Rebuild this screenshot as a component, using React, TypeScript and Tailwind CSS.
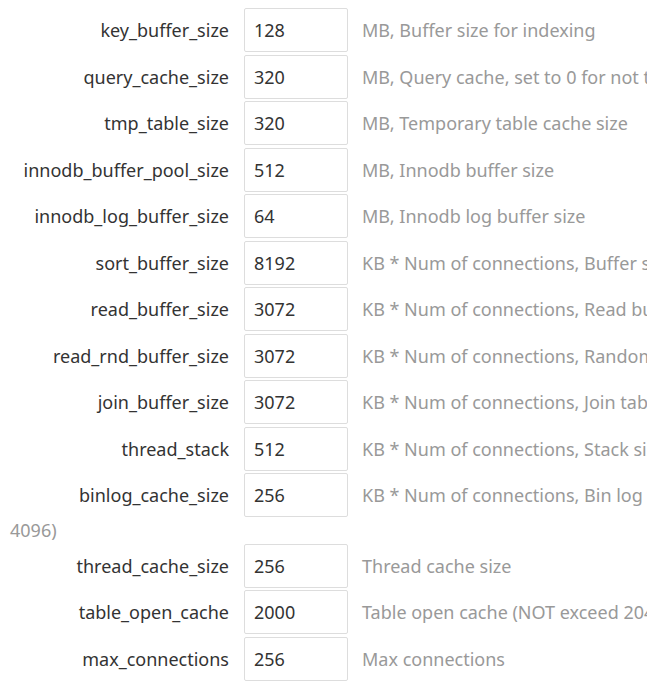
import React from 'react';

type Row = { name: string; value: string; desc: string };

const rows: Row[] = [
  { name: 'key_buffer_size', value: '128', desc: 'MB, Buffer size for indexing' },
  { name: 'query_cache_size', value: '320', desc: 'MB, Query cache, set to 0 for not to enable' },
  { name: 'tmp_table_size', value: '320', desc: 'MB, Temporary table cache size' },
  { name: 'innodb_buffer_pool_size', value: '512', desc: 'MB, Innodb buffer size' },
  { name: 'innodb_log_buffer_size', value: '64', desc: 'MB, Innodb log buffer size' },
  { name: 'sort_buffer_size', value: '8192', desc: 'KB * Num of connections, Buffer size for sorting' },
  { name: 'read_buffer_size', value: '3072', desc: 'KB * Num of connections, Read buffer size' },
  { name: 'read_rnd_buffer_size', value: '3072', desc: 'KB * Num of connections, Random read buffer size' },
  { name: 'join_buffer_size', value: '3072', desc: 'KB * Num of connections, Join table buffer size' },
  { name: 'thread_stack', value: '512', desc: 'KB * Num of connections, Stack size per thread' },
  { name: 'binlog_cache_size', value: '256', desc: 'KB * Num of connections, Bin log cache size (must be larger than 4096)' },
  { name: 'thread_cache_size', value: '256', desc: 'Thread cache size' },
  { name: 'table_open_cache', value: '2000', desc: 'Table open cache (NOT exceed 2048)' },
  { name: 'max_connections', value: '256', desc: 'Max connections' },
];

export default function App() {
  return (
    <div className="w-[647px] h-[685px] overflow-hidden bg-white">
      <div
        className="w-[930px] pl-[10px] pt-[8px] text-[18px] text-[#333]"
        style={{ fontFamily: '"Noto Sans", "Open Sans", sans-serif' }}
      >
        {rows.map((r) => (
          <div key={r.name} className="mb-[2.5px] leading-[22px]">
            <span className="inline-block w-[234px] pr-[15px] text-right align-middle leading-[24px]">{r.name}</span>
            <input
              readOnly
              value={r.value}
              className="inline-block w-[104px] h-[44px] align-middle border border-[#ddd] rounded-[2px] pl-[9px] text-[18px] text-[#333] outline-none"
            />
            <span className="ml-[14px] align-middle text-[#999]">{r.desc}</span>
          </div>
        ))}
      </div>
    </div>
  );
}
